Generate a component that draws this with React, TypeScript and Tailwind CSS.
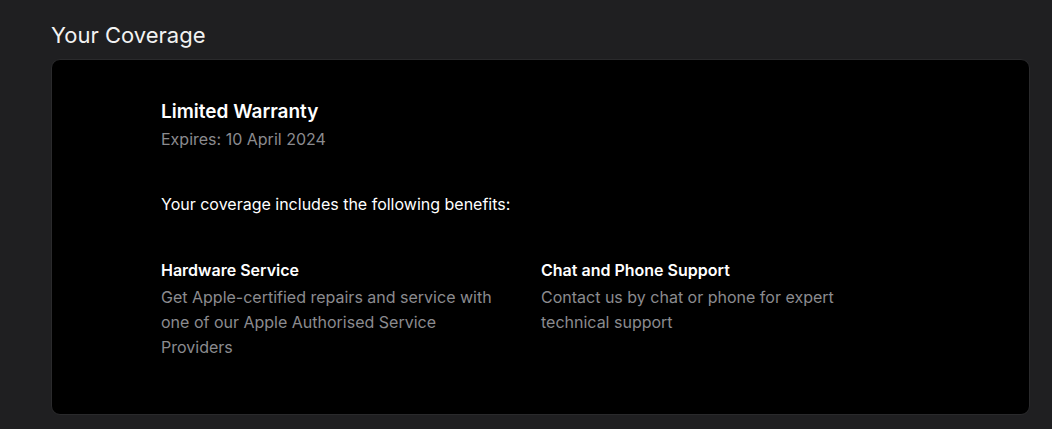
export default function App() {
  const benefits = [
    {
      title: "Hardware Service",
      body: "Get Apple-certified repairs and service with one of our Apple Authorised Service Providers",
    },
    {
      title: "Chat and Phone Support",
      body: "Contact us by chat or phone for expert technical support",
    },
  ];

  return (
    <div className="min-h-[429px] bg-[#1f1f21] pl-[51px] pr-[22px] pt-[20px] font-['Inter',sans-serif] antialiased">
      <h2 className="text-[22px] leading-[30px] text-[#f2f2f2]">Your Coverage</h2>
      <section className="mt-[9px] h-[356px] rounded-[9px] border border-[#2a2a2c] bg-black pl-[109px] pt-[39px]">
        <h3 className="text-[19px] font-semibold leading-[26px] text-white">Limited Warranty</h3>
        <p className="mt-[4px] text-[16px] leading-[20px] text-[#8b8b8f]">Expires: 10 April 2024</p>
        <p className="mt-[45px] text-[16px] leading-[20px] text-white">
          Your coverage includes the following benefits:
        </p>
        <div className="mt-[46px] flex gap-[40px]">
          {benefits.map((b) => (
            <div key={b.title} className="w-[340px]">
              <p className="text-[16px] font-semibold leading-[20px] text-white">{b.title}</p>
              <p className="mt-[5px] text-[16px] leading-[25px] text-[#8b8b8f]">{b.body}</p>
            </div>
          ))}
        </div>
      </section>
    </div>
  );
}
